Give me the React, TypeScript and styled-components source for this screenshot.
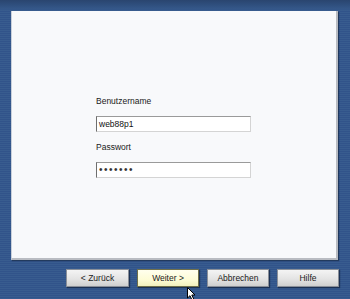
import React from "react";
import styled, { createGlobalStyle } from "styled-components";

const Global = createGlobalStyle`
  html, body { margin: 0; padding: 0; }
  body { font-family: "Liberation Sans", Arial, sans-serif; }
`;

const Page = styled.div`
  position: relative;
  width: 350px;
  height: 299px;
  overflow: hidden;
  box-sizing: border-box;
  padding-top: 11px;
  background:
    linear-gradient(to bottom, #2a456f 0px, #2e4d7b 4px, #35588a 9px, rgba(0,0,0,0) 11px),
    repeating-linear-gradient(to bottom, #385c8f 0px, #385c8f 1px, #31538a 1px, #31538a 2px);
  display: flex;
  flex-direction: column;
`;

const Panel = styled.div`
  margin-left: 11px;
  width: 327px;
  height: 249px;
  box-sizing: border-box;
  background: #f8f9fb;
  border-left: 1px solid #c9d0db;
  border-right: 2px solid #b9bcc2;
  border-bottom: 2px solid #b9bcc2;
  box-shadow: 1px 1px 1px rgba(20, 35, 60, 0.6);
  padding: 84px 0 0 84px;
  display: flex;
  flex-direction: column;
`;

const Label = styled.div<{ $top?: number }>`
  font-size: 8.5px;
  color: #1a1a1a;
  height: 12px;
  line-height: 12px;
  margin-bottom: 9px;
  margin-top: ${(p) => p.$top ?? 0}px;
`;

const Field = styled.div`
  width: 155px;
  height: 16px;
  box-sizing: border-box;
  background: #ffffff;
  border-top: 1px solid #9a9a9a;
  border-left: 1px solid #6e6e6e;
  border-right: 1px solid #d4d4d4;
  border-bottom: 1px solid #d4d4d4;
  font-size: 8.5px;
  color: #111;
  padding-left: 2px;
  line-height: 14px;
`;

const Dots = styled.span`
  letter-spacing: 1.5px;
  font-size: 10px;
  color: #333;
`;

const ButtonRow = styled.div`
  display: flex;
  gap: 8px;
  margin-top: 9px;
  margin-left: 66px;
`;

const Button = styled.div<{ $primary?: boolean; $w?: number }>`
  width: ${(p) => p.$w ?? 62}px;
  height: 18px;
  box-sizing: border-box;
  display: flex;
  align-items: center;
  justify-content: center;
  font-size: 8.5px;
  color: #1a1a1a;
  border: 1px solid ${(p) => (p.$primary ? "#6f6f4a" : "#8a8f98")};
  background: ${(p) =>
    p.$primary
      ? "linear-gradient(to bottom, #ffffee 0%, #fdfcd6 60%, #f2f0bd 100%)"
      : "linear-gradient(to bottom, #f4f4f4 0%, #e4e4e4 55%, #cfcfcf 100%)"};
  box-shadow: 1px 1px 1px rgba(10, 20, 40, 0.55);
`;

const Cursor = styled.svg`
  position: absolute;
  left: 187px;
  top: 287px;
`;

export default function App() {
  return (
    <Page>
      <Global />
      <Panel>
        <Label>Benutzername</Label>
        <Field>web88p1</Field>
        <Label $top={9}>Passwort</Label>
        <Field>
          <Dots>•••••••</Dots>
        </Field>
      </Panel>
      <ButtonRow>
        <Button $w={63}>&lt; Zurück</Button>
        <Button $primary>Weiter &gt;</Button>
        <Button>Abbrechen</Button>
        <Button>Hilfe</Button>
      </ButtonRow>
      <Cursor width="12" height="14" viewBox="0 0 12 14">
        <path
          d="M0.5 0.5 L0.5 11 L3 8.7 L5 13 L6.8 12.2 L4.8 8 L8 8 Z"
          fill="#ffffff"
          stroke="#000000"
          strokeWidth="1"
          strokeLinejoin="miter"
        />
      </Cursor>
    </Page>
  );
}
